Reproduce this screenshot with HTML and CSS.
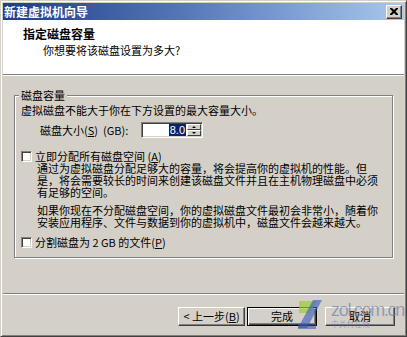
FILE: index.html
```html
<!DOCTYPE html>
<html lang="zh-CN">
<head>
<meta charset="utf-8">
<title>新建虚拟机向导</title>
<link rel="stylesheet" href="styles.css">
</head>
<body>
<div class="window">
  <div class="titlebar">
    <span class="title">新建虚拟机向导</span>
    <span class="close"><svg width="8" height="7" viewBox="0 0 8 7"><path d="M0 0h2l2 2 2-2h2v1L5.5 3.5 8 6v1H6L4 5 2 7H0V6l2.5-2.5L0 1z" fill="#000"/></svg></span>
  </div>
  <div class="header">
    <div class="h-title">指定磁盘容量</div>
    <div class="h-sub">你想要将该磁盘设置为多大?</div>
  </div>
  <div class="etch"></div>
  <div class="content">
    <fieldset class="group">
      <legend>磁盘容量</legend>
      <div class="desc">虚拟磁盘不能大于你在下方设置的最大容量大小。</div>
      <div class="size-row">
        <span class="size-label">磁盘大小(<u>S</u>)&nbsp;&nbsp;(GB):</span>
        <span class="spin">
          <span class="spin-field"><span class="sel">8.0</span></span>
          <span class="spin-btns"><span class="sb up"></span><span class="sb down"></span></span>
        </span>
      </div>
      <div class="check-row"><span class="cb"></span><span class="cl">立即分配所有磁盘空间 (<u>A</u>)</span></div>
      <p class="para first">通过为虚拟磁盘分配足够大的容量，将会提高你的虚拟机的性能。但<br>是，将会需要较长的时间来创建该磁盘文件并且在主机物理磁盘中必须<br>有足够的空间。</p>
      <p class="para second">如果你现在不分配磁盘空间，你的虚拟磁盘文件最初会非常小，随着你<br>安装应用程序、文件与数据到你的虚拟机中，磁盘文件会越来越大。</p>
      <div class="check-row split"><span class="cb"></span><span class="cl">分割磁盘为 2 GB 的文件(<u>P</u>)</span></div>
    </fieldset>
  </div>
  <div class="etch"></div>
  <div class="footer">
    <button class="btn back">&lt; 上一步(<u>B</u>)</button>
    <button class="btn finish">完成</button>
    <button class="btn cancel">取消</button>
  </div>
  <div class="watermark">
    <svg class="wm-logo" width="28" height="32" viewBox="0 0 28 32">
      <path d="M3 3 H21 L14 15 H3 Z" fill="#9acd32" opacity=".7"/>
      <path d="M17 2 H26 L11 30 H2 Z" fill="#3f63b8" opacity=".65"/>
      <path d="M2 26 H20 V31 H2 Z" fill="#2f4f9f" opacity=".55"/>
    </svg>
    <div class="wm-text">
      <span class="wm-url">zol.com.cn</span>
      <span class="wm-cn">中关村在线</span>
    </div>
  </div>
</div>
</body>
</html>
```

FILE: styles.css
```css
* { box-sizing: border-box; }
html, body { margin: 0; padding: 0; }
body {
  width: 407px;
  height: 337px;
  overflow: hidden;
  background: #d4d0c8;
  font-family: "Noto Sans CJK SC", "Liberation Sans", sans-serif;
  font-size: 11px;
  color: #000;
}
.window {
  position: relative;
  width: 407px;
  height: 337px;
  display: flex;
  flex-direction: column;
  background: #d4d0c8;
  border: 1px solid;
  border-color: #d4d0c8 #404040 #404040 #d4d0c8;
  box-shadow: inset 1px 1px #ffffff, inset -1px -1px #808080;
  padding: 2px;
}
.titlebar {
  height: 17px;
  flex: none;
  display: flex;
  align-items: center;
  justify-content: space-between;
  padding: 0 2px 0 1px;
  background: linear-gradient(90deg, #1e3d86 0%, #5577b8 45%, #a8c8ee 100%);
}
.title {
  color: #fff;
  font-weight: bold;
  font-size: 12px;
  line-height: 17px;
  white-space: nowrap;
}
.close {
  width: 16px;
  height: 14px;
  display: flex;
  align-items: center;
  justify-content: center;
  background: #d4d0c8;
  border: 1px solid;
  border-color: #ffffff #404040 #404040 #ffffff;
  box-shadow: inset -1px -1px #808080;
}
.header {
  height: 54px;
  flex: none;
  background: #fff;
  padding: 7px 0 0 20px;
}
.h-title {
  font-weight: bold;
  font-size: 12px;
  line-height: 14px;
}
.h-sub {
  margin: 2px 0 0 20px;
  line-height: 14px;
}
.etch {
  height: 2px;
  flex: none;
  border-top: 1px solid #808080;
  border-bottom: 1px solid #ffffff;
}
.content {
  flex: 1;
  padding: 12px 11px 0 11px;
}
.group {
  margin: 0;
  min-width: 0;
  border: 1px solid #808080;
  box-shadow: 1px 1px #ffffff, inset 1px 1px #ffffff;
  padding: 0 8px 9px 6px;
}
.group legend {
  padding: 0 2px;
  margin-left: -2px;
  line-height: 14px;
  background: #d4d0c8;
}
.desc {
  margin-top: 1px;
  line-height: 14px;
  white-space: nowrap;
}
.size-row {
  display: flex;
  align-items: center;
  height: 16px;
  margin-top: 5px;
}
.size-label {
  width: 101px;
  margin-left: 19px;
  line-height: 14px;
  white-space: nowrap;
}
.spin {
  display: flex;
  width: 62px;
  height: 16px;
  background: #fff;
  border: 1px solid;
  border-color: #808080 #ffffff #ffffff #808080;
  box-shadow: inset 1px 1px #404040, inset -1px -1px #d4d0c8;
  padding: 1px;
}
.spin-field {
  flex: 1;
  text-align: right;
  padding-right: 1px;
  font-family: "Liberation Sans", sans-serif;
  font-size: 11px;
  line-height: 12px;
}
.sel {
  background: #0a246a;
  color: #fff;
  padding: 0 1px;
}
.spin-btns {
  width: 14px;
  display: flex;
  flex-direction: column;
}
.sb {
  position: relative;
  flex: 1;
  background: #d4d0c8;
  border: 1px solid;
  border-color: #ffffff #404040 #404040 #ffffff;
}
.sb::after {
  content: "";
  position: absolute;
  left: 4px;
  top: 1px;
  border-left: 2px solid transparent;
  border-right: 2px solid transparent;
}
.sb.up::after { border-bottom: 2px solid #000; }
.sb.down::after { border-top: 2px solid #000; }
.check-row {
  display: flex;
  align-items: center;
  gap: 3px;
  height: 11px;
  margin-top: 13px;
}
.check-row.split { margin-top: 9px; }
.cb {
  width: 11px;
  height: 11px;
  flex: none;
  background: #fff;
  border: 1px solid;
  border-color: #808080 #ffffff #ffffff #808080;
  box-shadow: inset 1px 1px #404040, inset -1px -1px #d4d0c8;
}
.cl {
  line-height: 11px;
  white-space: nowrap;
}
.para {
  margin: 0;
  padding-left: 16px;
  line-height: 12px;
  white-space: nowrap;
}
.para.first { margin-top: 0; }
.para.second { margin-top: 6px; }
.footer {
  height: 39px;
  flex: none;
  display: flex;
  justify-content: flex-end;
  align-items: flex-start;
  padding: 12px 9px 0 0;
}
.btn {
  height: 19px;
  width: 70px;
  padding: 0;
  margin: 0;
  font-family: "Noto Sans CJK SC", "Liberation Sans", sans-serif;
  font-size: 11px;
  line-height: 15px;
  color: #000;
  background: #d4d0c8;
  border: 1px solid;
  border-color: #ffffff #404040 #404040 #ffffff;
  box-shadow: inset -1px -1px #808080;
}
.btn.back { width: 67px; margin-right: 2px; }
.btn.finish {
  border-color: #000;
  box-shadow: inset 1px 1px #ffffff, inset -1px -1px #404040, inset -2px -2px #808080;
  margin-right: 8px;
}
.watermark {
  position: absolute;
  left: 295px;
  top: 297px;
  display: flex;
  align-items: flex-start;
  gap: 7px;
  pointer-events: none;
}
.wm-text {
  display: flex;
  flex-direction: column;
  margin-top: 3px;
}
.wm-url {
  font-family: "Liberation Sans", sans-serif;
  font-size: 18px;
  letter-spacing: -1.3px;
  line-height: 18px;
  color: rgba(100, 112, 170, 0.6);
}
.wm-cn {
  font-size: 7.5px;
  line-height: 9px;
  color: rgba(100, 112, 170, 0.55);
  letter-spacing: 0.3px;
}
```
